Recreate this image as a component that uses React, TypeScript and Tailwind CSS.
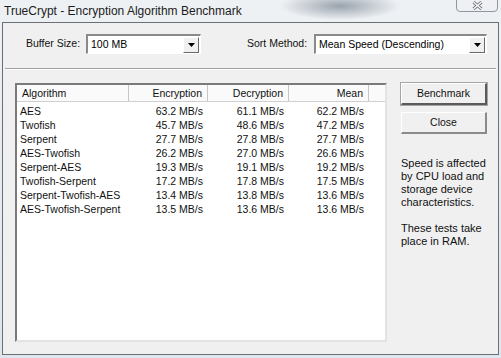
const rows = [
  ["AES", "63.2 MB/s", "61.1 MB/s", "62.2 MB/s"],
  ["Twofish", "45.7 MB/s", "48.6 MB/s", "47.2 MB/s"],
  ["Serpent", "27.7 MB/s", "27.8 MB/s", "27.7 MB/s"],
  ["AES-Twofish", "26.2 MB/s", "27.0 MB/s", "26.6 MB/s"],
  ["Serpent-AES", "19.3 MB/s", "19.1 MB/s", "19.2 MB/s"],
  ["Twofish-Serpent", "17.2 MB/s", "17.8 MB/s", "17.5 MB/s"],
  ["Serpent-Twofish-AES", "13.4 MB/s", "13.8 MB/s", "13.6 MB/s"],
  ["AES-Twofish-Serpent", "13.5 MB/s", "13.6 MB/s", "13.6 MB/s"],
];

function Combo({ value, width }: { value: string; width: string }) {
  return (
    <div
      className={`${width} h-[20px] flex border-t-2 border-l-2 border-t-[#8a8a8a] border-l-[#8a8a8a] border-b border-r border-b-white border-r-white bg-white`}
    >
      <div className="flex-1 pl-[3px] leading-[17px] text-[#000]">{value}</div>
      <div className="w-[16px] h-[16px] mt-[1px] mr-[1px] bg-[#f0f0f0] border-t border-l border-t-white border-l-white border-b border-r border-b-[#696969] border-r-[#696969] flex items-center justify-center">
        <svg width="7" height="4" viewBox="0 0 7 4">
          <path d="M0 0h7L3.5 4z" fill="#000" />
        </svg>
      </div>
    </div>
  );
}

function Button({ label, main }: { label: string; main?: boolean }) {
  return (
    <div
      className={`h-[22px] w-[86px] flex items-center justify-center bg-[#f0f0f0] border-t border-l border-t-white border-l-white border-b-2 border-r-2 ${
        main ? "border-b-[#5a5a5a] border-r-[#5a5a5a] outline outline-1 outline-[#a5a5a5]" : "border-b-[#8a8a8a] border-r-[#8a8a8a]"
      }`}
    >
      {label}
    </div>
  );
}

export default function App() {
  return (
    <div
      className="w-[501px] h-[358px] overflow-hidden bg-[radial-gradient(ellipse_60px_14px_at_340px_6px,#9aa3ad,transparent),linear-gradient(180deg,#eef1f4,#dfe6ee)] text-[10.5px] text-[#111]"
      style={{ fontFamily: '"Liberation Sans", Arial, sans-serif' }}
    >
      {/* title bar */}
      <div className="h-[22px] flex items-start justify-between">
        <div className="pl-[4px] pt-[2px] text-[12px] text-[#1c1c1c]">
          TrueCrypt - Encryption Algorithm Benchmark
        </div>
        <div className="mr-[3px] w-[42px] h-[13px] -mt-px border border-[#8f979f] rounded-b-[4px] bg-[#eef0f3] flex items-center justify-center">
          <svg width="11" height="9" viewBox="0 0 11 9">
            <path d="M1.5 1l8 7M9.5 1l-8 7" stroke="#6d747b" strokeWidth="3" />
            <path d="M1.5 1l8 7M9.5 1l-8 7" stroke="#ffffff" strokeWidth="1.2" />
          </svg>
        </div>
      </div>

      {/* client area */}
      <div className="ml-[2px] w-[497px] h-[333px] border border-[#6b6f73] bg-[#f0f0f0] flex flex-col">
        <div className="mt-[11px] flex items-center">
          <div className="ml-[23px] w-[60px]">Buffer Size:</div>
          <Combo value="100 MB" width="w-[115px]" />
          <div className="ml-[46px] w-[67px]">Sort Method:</div>
          <Combo value="Mean Speed (Descending)" width="w-[173px]" />
        </div>

        <div className="mt-[14px] mx-[2px] h-[2px] border-t border-t-[#a0a0a0] border-b border-b-white" />

        <div className="mt-[13px] flex">
          {/* list view */}
          <div className="ml-[12px] w-[372px] h-[259px] bg-white border-t-2 border-l-2 border-t-[#7a7a7a] border-l-[#7a7a7a] border-b-2 border-r-2 border-b-[#e3e3e3] border-r-[#e3e3e3]">
            <div className="flex h-[17px] bg-[#fafafa] border-b border-b-[#d0d0d0] leading-[17px]">
              <div className="w-[112px] pl-[5px] border-r border-r-[#c6c6c6]">Algorithm</div>
              <div className="w-[79px] pr-[5px] text-right border-r border-r-[#c6c6c6]">Encryption</div>
              <div className="w-[81px] pr-[5px] text-right border-r border-r-[#c6c6c6]">Decryption</div>
              <div className="w-[80px] pr-[5px] text-right border-r border-r-[#c6c6c6]">Mean</div>
              <div className="flex-1" />
            </div>
            <div className="pt-[2px]">
              {rows.map((r) => (
                <div key={r[0]} className="flex h-[14px] leading-[14px]">
                  <div className="w-[112px] pl-[3px]">{r[0]}</div>
                  <div className="w-[79px] pr-[5px] text-right">{r[1]}</div>
                  <div className="w-[81px] pr-[5px] text-right">{r[2]}</div>
                  <div className="w-[80px] pr-[5px] text-right">{r[3]}</div>
                </div>
              ))}
            </div>
          </div>

          {/* right column */}
          <div className="ml-[14px] w-[86px] flex flex-col">
            <Button label="Benchmark" main />
            <div className="mt-[7px]">
              <Button label="Close" />
            </div>
            <div className="mt-[23px] leading-[13px] text-[11px]">
              <p>
                Speed is affected
                <br />
                by CPU load and
                <br />
                storage device
                <br />
                characteristics.
              </p>
              <p className="mt-[13px]">
                These tests take
                <br />
                place in RAM.
              </p>
            </div>
          </div>
        </div>
      </div>
    </div>
  );
}
